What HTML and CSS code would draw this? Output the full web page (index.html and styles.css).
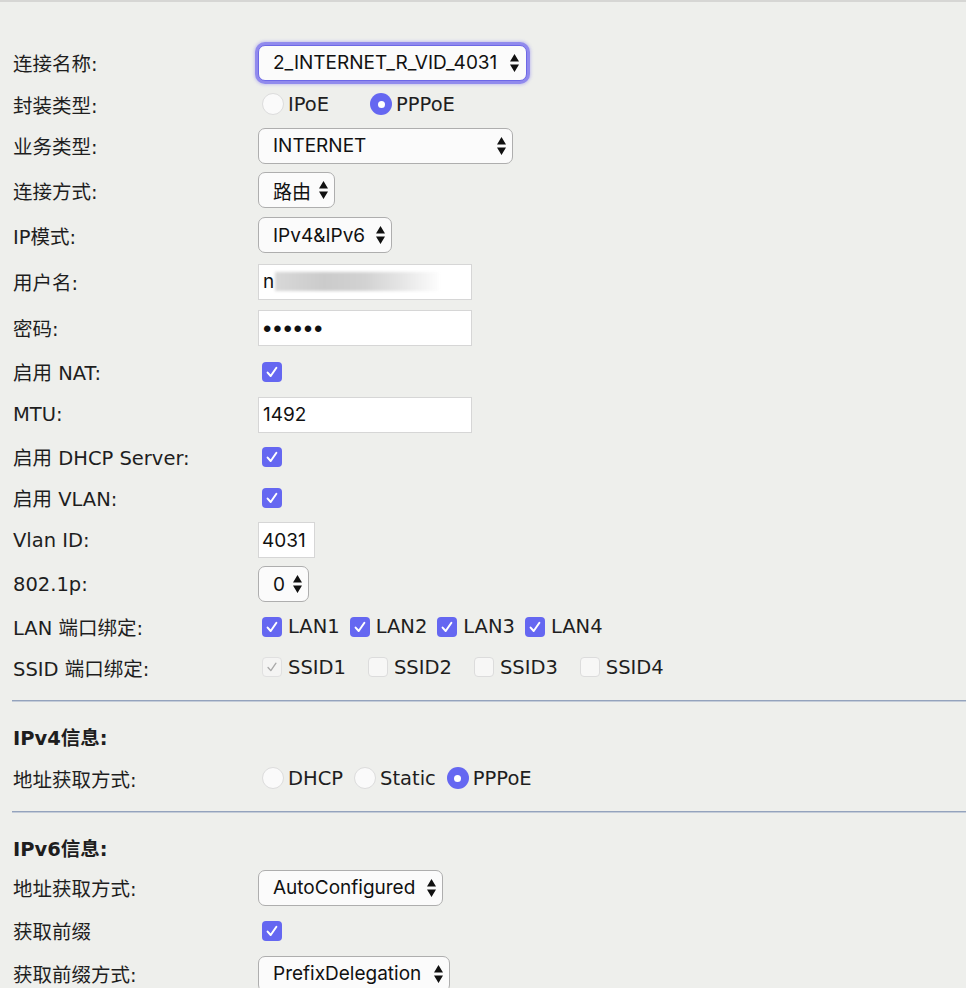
FILE: index.html
```html
<!DOCTYPE html>
<html lang="zh-CN">
<head>
<meta charset="utf-8">
<title>WAN 配置</title>
<link rel="stylesheet" href="styles.css">
</head>
<body>
<div class="topbar"></div>
<div class="page">
  <div class="form form-main">
    <div class="label">连接名称:</div>
    <div class="field">
      <div class="select select-focus sel-name"><span>2_INTERNET_R_VID_4031</span><svg class="arrows" viewBox="0 0 9 18"><path d="M4.5 0L9 7.5H0Z M0 10.5H9L4.5 18Z"/></svg></div>
    </div>

    <div class="label">封装类型:</div>
    <div class="field">
      <span class="opt opt-encap"><span class="radio off"></span>IPoE</span>
      <span class="opt opt-encap"><span class="radio on"></span>PPPoE</span>
    </div>

    <div class="label">业务类型:</div>
    <div class="field">
      <div class="select sel-service"><span>INTERNET</span><svg class="arrows" viewBox="0 0 9 18"><path d="M4.5 0L9 7.5H0Z M0 10.5H9L4.5 18Z"/></svg></div>
    </div>

    <div class="label">连接方式:</div>
    <div class="field">
      <div class="select sel-mode"><span>路由</span><svg class="arrows" viewBox="0 0 9 18"><path d="M4.5 0L9 7.5H0Z M0 10.5H9L4.5 18Z"/></svg></div>
    </div>

    <div class="label">IP模式:</div>
    <div class="field">
      <div class="select sel-ip"><span>IPv4&amp;IPv6</span><svg class="arrows" viewBox="0 0 9 18"><path d="M4.5 0L9 7.5H0Z M0 10.5H9L4.5 18Z"/></svg></div>
    </div>

    <div class="label">用户名:</div>
    <div class="field">
      <div class="input"><span>n</span><span class="blur"></span></div>
    </div>

    <div class="label">密码:</div>
    <div class="field">
      <div class="input"><span class="dots">••••••</span></div>
    </div>

    <div class="label">启用 NAT:</div>
    <div class="field">
      <span class="check on"><svg viewBox="0 0 20 20"><path d="M5.6 10.6L8.7 14L14.4 5.8"/></svg></span>
    </div>

    <div class="label">MTU:</div>
    <div class="field">
      <div class="input">1492</div>
    </div>

    <div class="label">启用 DHCP Server:</div>
    <div class="field">
      <span class="check on"><svg viewBox="0 0 20 20"><path d="M5.6 10.6L8.7 14L14.4 5.8"/></svg></span>
    </div>

    <div class="label">启用 VLAN:</div>
    <div class="field">
      <span class="check on"><svg viewBox="0 0 20 20"><path d="M5.6 10.6L8.7 14L14.4 5.8"/></svg></span>
    </div>

    <div class="label">Vlan ID:</div>
    <div class="field">
      <div class="input input-small">4031</div>
    </div>

    <div class="label">802.1p:</div>
    <div class="field">
      <div class="select sel-prio"><span>0</span><svg class="arrows" viewBox="0 0 9 18"><path d="M4.5 0L9 7.5H0Z M0 10.5H9L4.5 18Z"/></svg></div>
    </div>

    <div class="label">LAN 端口绑定:</div>
    <div class="field">
      <span class="opt opt-lan"><span class="check on"><svg viewBox="0 0 20 20"><path d="M5.6 10.6L8.7 14L14.4 5.8"/></svg></span>LAN1</span>
      <span class="opt opt-lan"><span class="check on"><svg viewBox="0 0 20 20"><path d="M5.6 10.6L8.7 14L14.4 5.8"/></svg></span>LAN2</span>
      <span class="opt opt-lan"><span class="check on"><svg viewBox="0 0 20 20"><path d="M5.6 10.6L8.7 14L14.4 5.8"/></svg></span>LAN3</span>
      <span class="opt opt-lan"><span class="check on"><svg viewBox="0 0 20 20"><path d="M5.6 10.6L8.7 14L14.4 5.8"/></svg></span>LAN4</span>
    </div>

    <div class="label">SSID 端口绑定:</div>
    <div class="field">
      <span class="opt opt-ssid"><span class="check dis"><svg viewBox="0 0 20 20"><path d="M5.6 10.6L8.7 14L14.4 5.8"/></svg></span>SSID1</span>
      <span class="opt opt-ssid"><span class="check off"></span>SSID2</span>
      <span class="opt opt-ssid"><span class="check off"></span>SSID3</span>
      <span class="opt opt-ssid"><span class="check off"></span>SSID4</span>
    </div>
  </div>

  <div class="divider"></div>
  <div class="section-title">IPv4信息:</div>
  <div class="form form-v4">
    <div class="label">地址获取方式:</div>
    <div class="field">
      <span class="opt opt-v4"><span class="radio off"></span>DHCP</span>
      <span class="opt opt-v4"><span class="radio off"></span>Static</span>
      <span class="opt opt-v4"><span class="radio on"></span>PPPoE</span>
    </div>
  </div>

  <div class="divider divider-2"></div>
  <div class="section-title">IPv6信息:</div>
  <div class="form form-v6">
    <div class="label">地址获取方式:</div>
    <div class="field">
      <div class="select sel-auto"><span>AutoConfigured</span><svg class="arrows" viewBox="0 0 9 18"><path d="M4.5 0L9 7.5H0Z M0 10.5H9L4.5 18Z"/></svg></div>
    </div>

    <div class="label">获取前缀</div>
    <div class="field">
      <span class="check on"><svg viewBox="0 0 20 20"><path d="M5.6 10.6L8.7 14L14.4 5.8"/></svg></span>
    </div>

    <div class="label">获取前缀方式:</div>
    <div class="field">
      <div class="select sel-prefix"><span>PrefixDelegation</span><svg class="arrows" viewBox="0 0 9 18"><path d="M4.5 0L9 7.5H0Z M0 10.5H9L4.5 18Z"/></svg></div>
    </div>
  </div>
</div>
</body>
</html>
```

FILE: styles.css
```css
html, body {
  margin: 0;
  padding: 0;
}

body {
  background: #eeefec;
  color: #1e1e1e;
  font-family: "DejaVu Sans", "Noto Sans CJK SC", sans-serif;
  font-size: 19.5px;
  overflow: hidden;
}

.topbar {
  height: 2px;
  background: #d6d6d4;
}

.page {
  padding: 38px 0 0 12px;
}

/* label / control grid */
.form {
  display: grid;
  grid-template-columns: 246px 1fr;
  align-items: center;
}

.form-main {
  grid-template-rows: 45px 38px 45px 44px 46px 47px 45px 43px 43px 41px 41px 44px 44px 41px 40px;
}

.form-v4 {
  grid-template-rows: 48px;
}

.form-v6 {
  grid-template-rows: 45px 41px 45px;
}

.label {
  padding-left: 1px;
  white-space: nowrap;
}

.field {
  display: flex;
  align-items: center;
}

/* select boxes */
.select {
  display: flex;
  align-items: center;
  justify-content: space-between;
  box-sizing: border-box;
  height: 36px;
  padding: 0 6px 0 14px;
  border: 1px solid #aeaeae;
  border-radius: 7px;
  background: #fbfbfb;
  color: #111;
  font-family: "Inter", "Noto Sans CJK SC", sans-serif;
  font-size: 19px;
  white-space: nowrap;
}

.select-focus {
  border-color: #6d68e6;
  box-shadow: 0 0 0 3px rgba(125, 118, 236, 0.75), 0 0 3px 4px rgba(150, 145, 240, 0.45);
}

.arrows {
  width: 9px;
  height: 18px;
  flex: none;
  fill: #111;
}

.sel-name { width: 269px; padding-right: 7px; }
.sel-service { width: 255px; }
.sel-mode { width: 77px; }
.sel-ip { width: 134px; }
.sel-prio { width: 51px; }
.sel-auto { width: 185px; }
.sel-prefix { width: 192px; }

/* text inputs */
.input {
  display: flex;
  align-items: center;
  box-sizing: border-box;
  width: 214px;
  height: 36px;
  padding: 0 4px;
  border: 1px solid #d6d6d6;
  background: #fff;
  color: #111;
  font-family: "Inter", sans-serif;
  font-size: 19px;
}

.input-small {
  width: 57px;
  padding: 0 3px;
}

.blur {
  display: inline-block;
  width: 164px;
  height: 19px;
  margin-left: 1px;
  background: linear-gradient(90deg, #d8d8d8 0%, #cbcbcb 30%, #d2d2d2 55%, #e6e6e6 78%, #fdfdfd 100%);
  filter: blur(1.5px);
}

.dots {
  font-family: "Liberation Sans", sans-serif;
  font-size: 24px;
  letter-spacing: 1.8px;
  line-height: 1;
  position: relative;
  top: 1px;
}

/* checkboxes */
.check {
  flex: none;
  display: inline-flex;
  align-items: center;
  justify-content: center;
  box-sizing: border-box;
  width: 20px;
  height: 20px;
  margin-left: 4px;
  border-radius: 4px;
}

.check svg {
  width: 20px;
  height: 20px;
  fill: none;
  stroke-width: 2;
  stroke-linecap: round;
  stroke-linejoin: round;
}

.check.on {
  background: #6567f1;
}

.check.on svg {
  stroke: #fff;
}

.check.off {
  background: #f7f7f6;
  border: 1px solid #dcdcdc;
}

.check.dis {
  background: #f4f4f3;
  border: 1px solid #e0e0e0;
}

.check.dis svg {
  stroke: #a9a9a9;
  stroke-width: 1.5;
}

/* radios */
.radio {
  flex: none;
  display: inline-flex;
  align-items: center;
  justify-content: center;
  box-sizing: border-box;
  width: 22px;
  height: 22px;
  margin-left: 4px;
  border-radius: 50%;
}

.radio.off {
  background: #fafafa;
  border: 1px solid #dcdcdc;
}

.radio.on {
  background: #6567f1;
}

.radio.on::after {
  content: "";
  width: 7px;
  height: 7px;
  border-radius: 50%;
  background: #fff;
}

/* option groups */
.opt {
  display: inline-flex;
  align-items: center;
  gap: 4px;
  white-space: nowrap;
}

.opt-encap {
  margin-right: 37px;
}

.opt-lan {
  gap: 6px;
  margin-right: 6px;
}

.opt-ssid {
  gap: 6px;
  margin-right: 18px;
}

.opt-v4 {
  margin-right: 11px;
}

.opt-v4 + .opt-v4 .radio {
  margin-left: 0;
}

/* sections */
.divider {
  height: 2px;
  margin-top: 13px;
  background: #94a3bd;
  border-bottom: 1px solid #c4ccd8;
  box-sizing: border-box;
}

.divider-2 {
  margin-top: 9px;
}

.section-title {
  height: 30px;
  margin-top: 22px;
  line-height: 30px;
  font-weight: 700;
  padding-left: 1px;
}
```
